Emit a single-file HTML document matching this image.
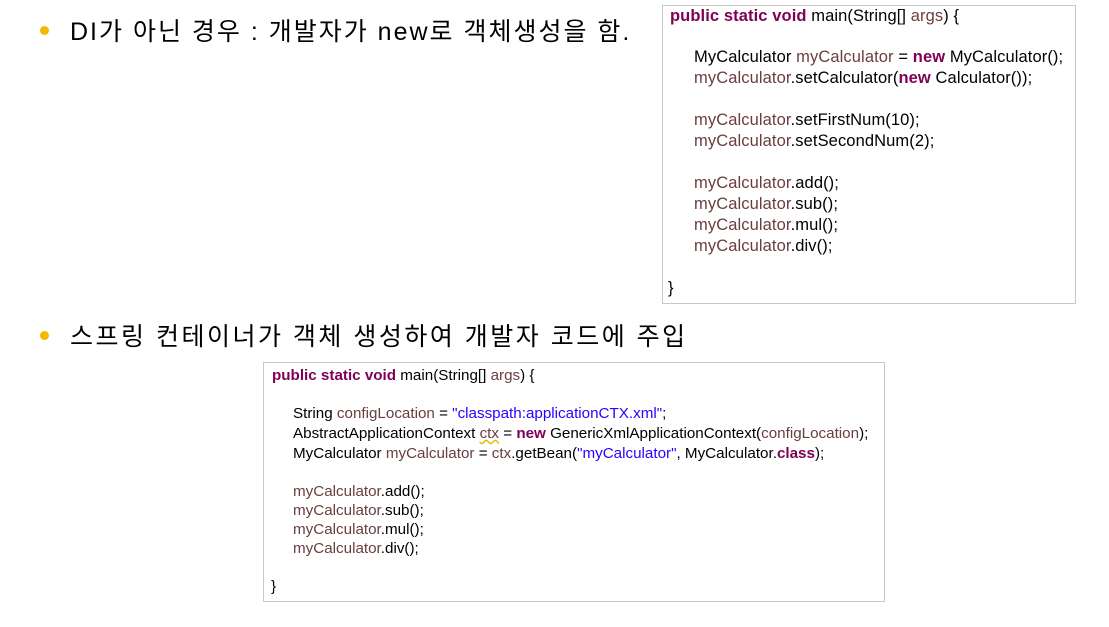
<!DOCTYPE html>
<html><head><meta charset="utf-8"><style>
body{margin:0;width:1109px;height:627px;background:#fff;position:relative;overflow:hidden;font-family:"Liberation Sans","Noto Sans CJK KR",sans-serif;color:#000}
.b{position:absolute;font-size:25px;white-space:nowrap;letter-spacing:2px}
.dot{position:absolute;width:9px;height:9px;border-radius:50%;background:#f5b800}
.box{position:absolute;border:1px solid #c8c8c8;background:#fff}
.l{position:absolute;white-space:nowrap}
.k{color:#7f0055;font-weight:bold}.v{color:#6a3e3e}.s{color:#2a00ff}
.c1 .l{font-size:16.5px;letter-spacing:0.1px}.c2 .l{font-size:15.2px;letter-spacing:0px}
</style></head><body>
<div class="dot" style="left:40px;top:26px"></div>
<div class="b" style="left:70px;top:12px">DI가 아닌 경우 : 개발자가 new로 객체생성을 함.</div>
<div class="dot" style="left:40px;top:331px"></div>
<div class="b" style="left:70px;top:317px;letter-spacing:2.5px">스프링 컨테이너가 객체 생성하여 개발자 코드에 주입</div>

<div class="box c1" style="left:662px;top:5px;width:412px;height:297px">
<div class="l" style="left:7px;top:1px"><span class="k">public static void</span> main(String[] <span class="v">args</span>) {</div>
<div class="l" style="left:31px;top:42px">MyCalculator <span class="v">myCalculator</span> = <span class="k">new</span> MyCalculator();</div>
<div class="l" style="left:31px;top:63px"><span class="v">myCalculator</span>.setCalculator(<span class="k">new</span> Calculator());</div>
<div class="l" style="left:31px;top:105px"><span class="v">myCalculator</span>.setFirstNum(10);</div>
<div class="l" style="left:31px;top:126px"><span class="v">myCalculator</span>.setSecondNum(2);</div>
<div class="l" style="left:31px;top:168px"><span class="v">myCalculator</span>.add();</div>
<div class="l" style="left:31px;top:189px"><span class="v">myCalculator</span>.sub();</div>
<div class="l" style="left:31px;top:210px"><span class="v">myCalculator</span>.mul();</div>
<div class="l" style="left:31px;top:231px"><span class="v">myCalculator</span>.div();</div>
<div class="l" style="left:5px;top:273px">}</div>
</div>

<div class="box c2" style="left:263px;top:362px;width:620px;height:238px">
<div class="l" style="left:8px;top:4px"><span class="k">public static void</span> main(String[] <span class="v">args</span>) {</div>
<div class="l" style="left:29px;top:42px">String <span class="v">configLocation</span> = <span class="s">"classpath:applicationCTX.xml"</span>;</div>
<div class="l" style="left:29px;top:62px">AbstractApplicationContext <span class="v" style="text-decoration:underline wavy #e0c000">ctx</span> = <span class="k">new</span> GenericXmlApplicationContext(<span class="v">configLocation</span>);</div>
<div class="l" style="left:29px;top:82px">MyCalculator <span class="v">myCalculator</span> = <span class="v">ctx</span>.getBean(<span class="s">"myCalculator"</span>, MyCalculator.<span class="k">class</span>);</div>
<div class="l" style="left:29px;top:120px"><span class="v">myCalculator</span>.add();</div>
<div class="l" style="left:29px;top:139px"><span class="v">myCalculator</span>.sub();</div>
<div class="l" style="left:29px;top:158px"><span class="v">myCalculator</span>.mul();</div>
<div class="l" style="left:29px;top:177px"><span class="v">myCalculator</span>.div();</div>
<div class="l" style="left:7px;top:215px">}</div>
</div>
</body></html>
